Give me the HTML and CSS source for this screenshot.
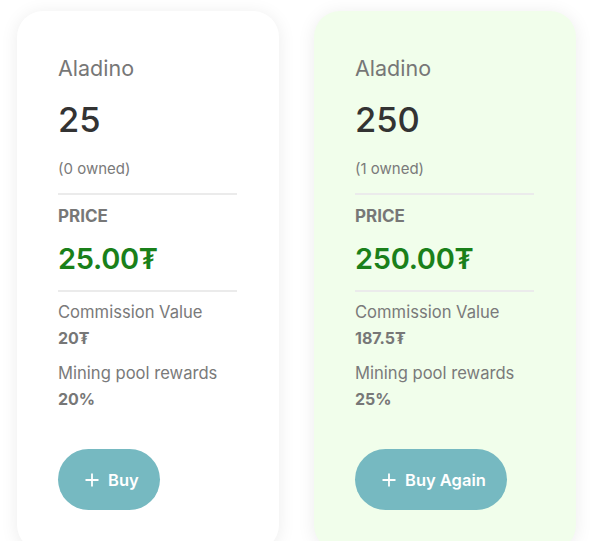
FILE: index.html
```html
<!DOCTYPE html>
<html>
<head>
<meta charset="utf-8">
<link rel="stylesheet" href="styles.css">
</head>
<body>
<div class="cards">
  <div class="card">
    <div class="name">Aladino</div>
    <div class="amount">25</div>
    <div class="owned">(0 owned)</div>
    <div class="rule"></div>
    <div class="label">PRICE</div>
    <div class="price">25.00₮</div>
    <div class="rule rule2"></div>
    <div class="stat-label">Commission Value</div>
    <div class="stat-value">20₮</div>
    <div class="stat-label second">Mining pool rewards</div>
    <div class="stat-value">20%</div>
    <button class="buy"><svg class="plus" width="16" height="16" viewBox="0 0 16 16"><path d="M8 1.5V14.5M1.5 8H14.5" stroke="#fff" stroke-width="1.8" fill="none"/></svg><span>Buy</span></button>
  </div>
  <div class="card owned-card">
    <div class="name">Aladino</div>
    <div class="amount">250</div>
    <div class="owned">(1 owned)</div>
    <div class="rule"></div>
    <div class="label">PRICE</div>
    <div class="price">250.00₮</div>
    <div class="rule rule2"></div>
    <div class="stat-label">Commission Value</div>
    <div class="stat-value">187.5₮</div>
    <div class="stat-label second">Mining pool rewards</div>
    <div class="stat-value">25%</div>
    <button class="buy"><svg class="plus" width="16" height="16" viewBox="0 0 16 16"><path d="M8 1.5V14.5M1.5 8H14.5" stroke="#fff" stroke-width="1.8" fill="none"/></svg><span>Buy Again</span></button>
  </div>
</div>
</body>
</html>
```

FILE: styles.css
```css
html, body {
  margin: 0;
  padding: 0;
  background: #ffffff;
  font-family: Inter, "Noto Sans", "DejaVu Sans", sans-serif;
  overflow: hidden;
}
.cards {
  display: flex;
  gap: 35px;
  padding: 11px 0 0 17px;
}
.card {
  width: 262px;
  height: 540px;
  box-sizing: border-box;
  padding: 45px 42px 0 41px;
  background: #ffffff;
  border-radius: 26px;
  box-shadow: 0 2px 18px rgba(0, 0, 0, 0.08);
  display: flex;
  flex-direction: column;
  align-items: flex-start;
}
.owned-card {
  background: #f1feeb;
}
.card > div {
  line-height: 1.2;
}
.name {
  font-size: 21.5px;
  color: #777777;
}
.amount {
  margin-top: 17px;
  font-size: 34.5px;
  font-weight: 500;
  color: #333333;
}
.owned {
  margin-top: 19.5px;
  font-size: 15px;
  color: #7a7a7a;
}
.rule {
  align-self: stretch;
  height: 2px;
  background: #ebebeb;
  margin-top: 15px;
}
.rule2 {
  margin-top: 14px;
}
.label {
  margin-top: 11.5px;
  font-size: 17px;
  font-weight: 700;
  color: #777777;
}
.price {
  margin-top: 15px;
  font-size: 29px;
  font-weight: 600;
  color: #1a801a;
  letter-spacing: -0.3px;
}
.stat-label {
  margin-top: 10.5px;
  font-size: 16.6px;
  color: #7a7a7a;
}
.stat-label.second {
  margin-top: 16.5px;
}
.stat-value {
  margin-top: 6px;
  font-size: 16px;
  font-weight: 700;
  color: #777777;
}
.buy {
  margin-top: 39.5px;
  height: 61px;
  border: none;
  border-radius: 31px;
  background: #76b9c1;
  color: #ffffff;
  font-family: Inter, "Noto Sans", sans-serif;
  font-size: 16.5px;
  font-weight: 600;
  padding: 0 21px 0 26px;
  display: flex;
  align-items: center;
  gap: 8px;
}
.plus {
  display: block;
}
```
